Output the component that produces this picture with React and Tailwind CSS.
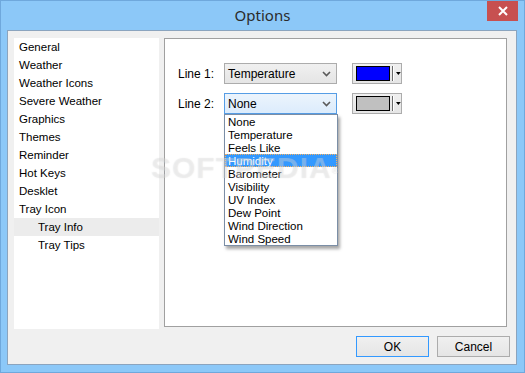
import React from "react";

const navItems = [
  { t: "General" },
  { t: "Weather" },
  { t: "Weather Icons" },
  { t: "Severe Weather" },
  { t: "Graphics" },
  { t: "Themes" },
  { t: "Reminder" },
  { t: "Hot Keys" },
  { t: "Desklet" },
  { t: "Tray Icon" },
  { t: "Tray Info", sub: true, sel: true },
  { t: "Tray Tips", sub: true },
];

const options = [
  "None",
  "Temperature",
  "Feels Like",
  "Humidity",
  "Barometer",
  "Visibility",
  "UV Index",
  "Dew Point",
  "Wind Direction",
  "Wind Speed",
];

function Chevron() {
  return (
    <svg width="9" height="6" viewBox="0 0 9 6">
      <path d="M1 1 L4.5 4.5 L8 1" fill="none" stroke="#5a5a5a" strokeWidth="1.6" />
    </svg>
  );
}

function Combo({ value, active }) {
  return (
    <div
      className={
        "w-[113px] h-[21px] border flex items-center justify-between pl-[3px] pr-[5px] " +
        (active
          ? "border-[#569de5] bg-linear-to-b from-[#ecf4fc] to-[#dcecfc]"
          : "border-[#acacac] bg-linear-to-b from-[#f0f0f0] to-[#e5e5e5]")
      }
    >
      <span className="text-[12px] leading-none text-black pt-[1px]">{value}</span>
      <Chevron />
    </div>
  );
}

function ColorButton({ color }) {
  return (
    <div className="w-[50px] h-[21px] border border-[#acacac] bg-linear-to-b from-[#f0f0f0] to-[#e5e5e5] flex items-center pl-[3px]">
      <div className="w-[36px] h-[15px] border border-black" style={{ background: color }} />
      <div className="ml-[2px] w-px h-[15px] bg-[#6a6a6a] border-r border-white box-content" />
      <svg className="ml-[2px]" width="5" height="3" viewBox="0 0 5 3">
        <path d="M0 0 H5 L2.5 3 Z" fill="#000" />
      </svg>
    </div>
  );
}

export default function App() {
  return (
    <div
      className="relative w-[525px] h-[373px] bg-[#8cc8f8] border border-[#6fa8dc] flex flex-col overflow-hidden"
      style={{ fontFamily: '"Liberation Sans", Arial, sans-serif' }}
    >
      {/* Title bar */}
      <div className="h-[29px] flex items-start shrink-0">
        <div className="w-[37px]" />
        <div
          className="flex-1 h-[29px] flex items-center justify-center text-[15px] text-[#2b2b2b] pb-[1px]"
          style={{ fontFamily: '"Noto Sans", "Open Sans", sans-serif' }}
        >
          Options
        </div>
        <div className="w-[31px] h-[20px] bg-[#c75050] flex items-center justify-center mr-[6px]">
          <svg width="10" height="10" viewBox="0 0 10 10">
            <path d="M1 1 L9 9 M9 1 L1 9" stroke="#fff" strokeWidth="2" />
          </svg>
        </div>
      </div>

      {/* Client area */}
      <div className="ml-[6px] mr-[7px] mb-[7px] flex-1 border border-[#8ba4be] bg-[#f0f0f0] flex flex-col pt-[7px] pl-[6px] pr-[9px]">
        <div className="flex gap-[5px] h-[291px] items-start">
          {/* Nav list */}
          <div className="w-[145px] h-[291px] bg-white flex flex-col">
            {navItems.map((it) => (
              <div
                key={it.t}
                className={
                  "h-[18px] flex items-center pt-[2px] text-[11.5px] text-black " +
                  (it.sub ? "pl-[24px] " : "pl-[5px] ") +
                  (it.sel ? "bg-[#ececec]" : "")
                }
              >
                {it.t}
              </div>
            ))}
          </div>

          {/* Settings panel */}
          <div className="relative w-[343px] h-[289px] border border-[#a0a0a0] bg-white pl-[13px] pt-[24px] flex flex-col gap-[9px]">
            <div className="flex items-center">
              <span className="w-[46px] text-[12px] text-black">Line 1:</span>
              <Combo value="Temperature" />
              <div className="ml-[15px]">
                <ColorButton color="#0000ff" />
              </div>
            </div>
            <div className="flex items-center">
              <span className="w-[46px] text-[12px] text-black">Line 2:</span>
              <div className="relative">
                <Combo value="None" active />
                <div className="absolute left-0 top-[21px] w-[114px] border border-[#7b8ea6] bg-white shadow-[2px_3px_3px_rgba(0,0,0,0.35)] z-10">
                  {options.map((o) => (
                    <div
                      key={o}
                      className={
                        "h-[13px] flex items-center pl-[2px] pt-[2px] text-[11.5px] leading-none " +
                        (o === "Humidity"
                          ? "bg-[#3399ff] text-white border border-dotted border-[#f5b060]"
                          : "text-black border border-transparent")
                      }
                    >
                      {o}
                    </div>
                  ))}
                </div>
              </div>
              <div className="ml-[15px]">
                <ColorButton color="#c0c0c0" />
              </div>
            </div>
          </div>
        </div>

        {/* Buttons */}
        <div className="mt-[7px] flex justify-end gap-[8px]">
          <button className="w-[73px] h-[21px] border border-[#3399ff] bg-linear-to-b from-[#f0f0f0] to-[#e5e5e5] text-[12px] text-black">
            OK
          </button>
          <button className="w-[73px] h-[21px] border border-[#acacac] bg-linear-to-b from-[#f0f0f0] to-[#e5e5e5] text-[12px] text-black -mr-[3px]">
            Cancel
          </button>
        </div>
      </div>

      {/* Watermark */}
      <div className="pointer-events-none absolute left-[150px] top-[144px] text-[30px] font-bold tracking-[1px] text-white/25 z-20 [text-shadow:0_0_1px_rgba(150,150,150,0.25)]">
        SOFTPEDIA<sup className="text-[9px]">®</sup>
      </div>
    </div>
  );
}
